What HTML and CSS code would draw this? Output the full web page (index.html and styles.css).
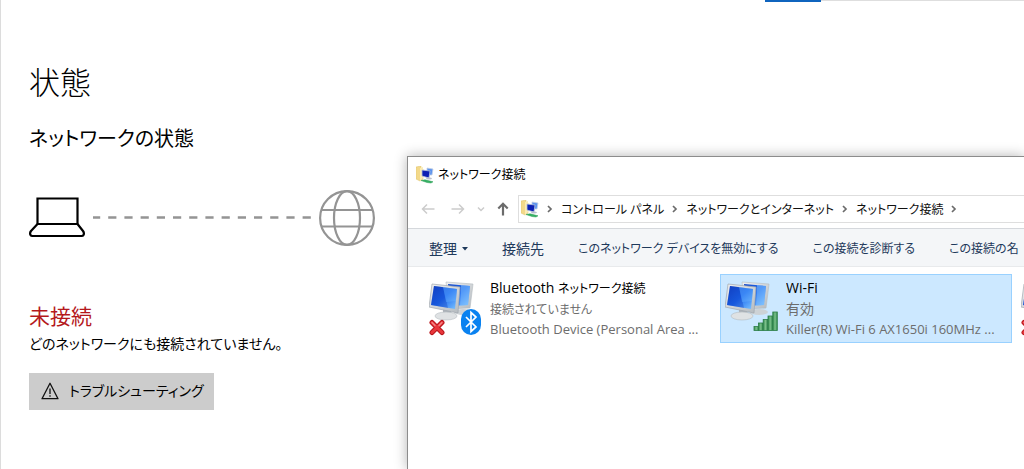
FILE: index.html
```
<!DOCTYPE html>
<html lang="ja">
<head>
  <meta charset="UTF-8" />
  <meta name="viewport" content="width=device-width, initial-scale=1.0" />
  <title>ネットワークの状態</title>
  <link rel="stylesheet" href="styles.css">
</head>
<body>
  <!-- Shared icons -->
  <svg class="sprite" aria-hidden="true">
    <defs>
      <linearGradient id="screen" x1="0" y1="0" x2="1" y2="1">
        <stop offset="0" stop-color="#1547c8" />
        <stop offset="0.5" stop-color="#1d6af0" />
        <stop offset="1" stop-color="#7cc4ff" />
      </linearGradient>
      <linearGradient id="metal" x1="0" y1="0" x2="1" y2="1">
        <stop offset="0" stop-color="#f0f1f2" />
        <stop offset="1" stop-color="#b4babf" />
      </linearGradient>
      <linearGradient id="bars" x1="0" y1="0" x2="1" y2="0">
        <stop offset="0" stop-color="#2f8a4c" />
        <stop offset="0.5" stop-color="#7cc08c" />
        <stop offset="1" stop-color="#2f8a4c" />
      </linearGradient>
    </defs>
    <symbol id="pcs" viewBox="0 0 54 56">
      <ellipse cx="34" cy="31" rx="9" ry="3" fill="#cdd2d6" />
      <path d="M17 1 44 3 41 27 20 28Z" fill="url(#metal)" stroke="#b4bac0" stroke-width=".6" />
      <path d="M19 3 41 5 39 24 22 25Z" fill="url(#screen)" />
      <path d="M32 4 41 5 39 24 31 25Z" fill="#8cc9ff" opacity=".5" />
      <path d="M14 27h7l2 7h-9z" fill="#aeb4bb" />
      <ellipse cx="17" cy="35" rx="11" ry="4" fill="#dfe2e4" stroke="#b4babf" stroke-width=".6" />
      <path d="M3 3 31 6 29 32 0 26Z" fill="url(#metal)" stroke="#a0a7af" stroke-width=".7" />
      <path d="M5 5 28 8 26 28 2 24Z" fill="url(#screen)" />
      <path d="M5 5 14 6 19 27 2 24Z" fill="#0b2fae" opacity=".3" />
      <path d="M14 6 28 8 27 20 17 21Z" fill="#74bcff" opacity=".35" />
    </symbol>
    <symbol id="cross" viewBox="0 0 16 16">
      <path d="M3 3 13 13M13 3 3 13" stroke="#b8161c" stroke-width="5" stroke-linecap="round" />
      <path d="M3 3 13 13M13 3 3 13" stroke="#e8373c" stroke-width="3" stroke-linecap="round" />
      <path d="M3 3 6 6M13 3 10 6" stroke="#f58c8c" stroke-width="1.2" stroke-linecap="round" />
    </symbol>
    <symbol id="netfolder" viewBox="0 0 18 18">
      <path d="M0 1 5 0v3l2 0v10l-3 2-4-2z" fill="#f3d98a" stroke="#dcc06a" stroke-width=".5" />
      <path d="M4 2 7 1v11l-3 3z" fill="#fbecb4" />
      <path d="M11 2 17 3 16 9 11 9Z" fill="#5c93ee" stroke="#c3cfe4" stroke-width=".8" />
      <path d="M6 4 14 5 13 12 6 10Z" fill="#0d20b4" stroke="#b5c3dd" stroke-width=".8" />
      <ellipse cx="13" cy="12.500" rx="3" ry="1" fill="#b9c0cc" />
      <path d="M5 14.500 9 13.800l4 1 4 1-2 1.200-4-.500z" fill="#35b265" stroke="#2a9a53" stroke-width=".5" />
    </symbol>
    <symbol id="chevron" viewBox="0 0 8 10">
      <path d="M2 2 5 5 2 8" fill="none" stroke="#6b6b6b" stroke-width="1.7" />
    </symbol>
  </svg>

  <main class="settings">
    <div class="top-edge"><span class="accent"></span><span class="rule"></span></div>
    <h1>状態</h1>
    <h2>ネットワークの状態</h2>

    <div class="diagram">
      <svg class="laptop" viewBox="0 0 56 56" fill="none" stroke="#000" stroke-width="2.2" stroke-linejoin="round">
        <path d="M8.500 8.500H48.500V34H8.500Z" stroke-linejoin="miter" />
        <path d="M8.500 34 2 41Q.500 43 1.500 45 2 46 3.500 46H52.500Q54 46 54.500 45 55.500 43 54 41L48.500 34" />
      </svg>
      <svg class="link-line" height="4"><line x1="0" y1="1.5" x2="100%" y2="1.5" stroke="#949494" stroke-width="2.4" stroke-dasharray="8.200 8" stroke-dashoffset="1" /></svg>
      <svg class="globe" viewBox="0 0 56 56" fill="none" stroke="#949494" stroke-width="2.200">
        <circle cx="28" cy="28" r="26.900" />
        <ellipse cx="28" cy="28" rx="13" ry="26.900" />
        <path d="M3 20H53M3 36.500H53" />
      </svg>
    </div>

    <p class="status">未接続</p>
    <p class="detail">どのネットワークにも接続されていません。</p>
    <button class="trouble" type="button">
      <svg width="18" height="18" viewBox="0 0 18 18" fill="none" stroke="#111" stroke-width="1.300">
        <path d="M9 1.300 17 16.700H1Z" stroke-linejoin="round" />
        <path d="M9 6.500V12M9 13.300V14.800" />
      </svg>
      トラブルシューティング
    </button>
  </main>

  <section class="window">
    <header class="titlebar">
      <svg width="18" height="18"><use href="#netfolder" /></svg>
      <span>ネットワーク接続</span>
    </header>

    <div class="navbar">
      <button type="button" aria-label="戻る"><svg width="14" height="12" viewBox="0 0 14 12" fill="none" stroke="#ccc" stroke-width="1.500"><path d="M13.500 6H1.500M6 1.500 1.500 6 6 10.500" /></svg></button>
      <button type="button" aria-label="進む"><svg width="14" height="12" viewBox="0 0 14 12" fill="none" stroke="#ccc" stroke-width="1.500"><path d="M.500 6H12.500M8 1.500 12.500 6 8 10.500" /></svg></button>
      <button class="recent" type="button" aria-label="最近表示した場所"><svg width="8" height="6" viewBox="0 0 8 6" fill="none" stroke="#ccc" stroke-width="1.500"><path d="M1 1.500 4 4.500 7 1.500" /></svg></button>
      <button class="up" type="button" aria-label="上へ"><svg width="12" height="14" viewBox="0 0 12 14" fill="none" stroke="#6b6b6b" stroke-width="2.2"><path d="M6 13.500V2M1.300 6.500 6 1.800 10.700 6.500" /></svg></button>
      <nav class="address">
        <svg width="18" height="18"><use href="#netfolder" /></svg>
        <svg width="8" height="10"><use href="#chevron" /></svg>
        <a href="#">コントロール パネル</a>
        <svg width="8" height="10"><use href="#chevron" /></svg>
        <a href="#">ネットワークとインターネット</a>
        <svg width="8" height="10"><use href="#chevron" /></svg>
        <a href="#">ネットワーク接続</a>
        <svg width="8" height="10"><use href="#chevron" /></svg>
      </nav>
    </div>

    <div class="toolbar">
      <button class="organize" type="button">整理<svg width="6" height="4" viewBox="0 0 6 4"><path d="M0 0H6L3 3.500Z" fill="#1e395b" /></svg></button>
      <button class="connect" type="button">接続先</button>
      <button type="button">このネットワーク デバイスを無効にする</button>
      <button type="button">この接続を診断する</button>
      <button type="button">この接続の名</button>
    </div>

    <ul class="connections">
      <li class="connection">
        <svg class="adapter" viewBox="0 0 54 56">
          <use href="#pcs" width="54" height="56" />
          <use href="#cross" x="0" y="38" width="16" height="17" />
          <rect x="32" y="28" width="20" height="26" rx="10" fill="#0a82f0" />
          <path d="M37 36 47 46 42 50.500V31.500L47 36 37 46" fill="none" stroke="#fff" stroke-width="1.700" />
        </svg>
        <div class="info">
          <p class="name">Bluetooth <span class="ja">ネットワーク接続</span></p>
          <p><span class="ja">接続されていません</span></p>
          <p class="device">Bluetooth Device (Personal Area ...</p>
        </div>
      </li>
      <li class="connection selected">
        <svg class="adapter" viewBox="0 0 54 56">
          <use href="#pcs" width="54" height="56" />
          <g fill="url(#bars)" stroke="#2b7d46" stroke-width=".8">
            <rect x="29" y="45.500" width="4.500" height="4" />
            <rect x="33.500" y="42" width="4.500" height="7.500" />
            <rect x="38.200" y="38.500" width="4.500" height="11" />
            <rect x="43" y="35" width="4.500" height="14.500" />
            <rect x="47.800" y="31" width="4.500" height="18.500" />
          </g>
        </svg>
        <div class="info">
          <p class="name">Wi-Fi</p>
          <p>有効</p>
          <p class="device">Killer(R) Wi-Fi 6 AX1650i 160MHz ...</p>
        </div>
      </li>
      <li class="connection">
        <svg class="adapter" viewBox="0 0 54 56">
          <use href="#pcs" width="54" height="56" />
          <use href="#cross" x="0" y="38" width="16" height="17" />
        </svg>
      </li>
    </ul>
  </section>
</body>
</html>
```
FILE: styles.css
```
/* Base Styles */
* {
  box-sizing: border-box;
  margin: 0;
  padding: 0;
}
body {
  position: relative;
  min-height: 100vh;
  overflow: hidden;
  font-family: "Open Sans", "Noto Sans CJK JP", sans-serif;
  font-feature-settings: "palt";
  background: #fff;
  color: #000;
}
button {
  font: inherit;
  font-feature-settings: inherit;
  color: inherit;
  background: none;
  border: none;
  white-space: nowrap;
}
svg {
  display: block;
  flex: none;
}
.sprite {
  position: absolute;
  width: 0;
  height: 0;
}

/* Settings page */
.settings {
  min-height: 100vh;
  padding-left: 28px;
  border-left: 1px solid #dcdcdc;
}
.top-edge {
  display: flex;
  justify-content: flex-end;
  height: 2px;
}
.accent {
  width: 56px;
  background: #0f64be;
}
.rule {
  width: 203px;
  height: 1px;
  background: #dedede;
}
h1 {
  margin-top: 60px;
  font-size: 31px;
  font-weight: 300;
  line-height: 40px;
}
h2 {
  margin-top: 21px;
  font-size: 20px;
  font-weight: 400;
  line-height: 32px;
}
.diagram {
  display: flex;
  align-items: center;
  gap: 8px;
  width: 346px;
  margin-top: 35px;
}
.laptop,
.globe {
  width: 56px;
  height: 56px;
}
.link-line {
  flex: 1;
  min-width: 0;
}
.status {
  margin-top: 56px;
  font-size: 21px;
  line-height: 28px;
  color: #b4181c;
}
.detail {
  margin-top: 2px;
  font-size: 14px;
  line-height: 24px;
}
.trouble {
  display: flex;
  align-items: center;
  gap: 10px;
  margin-top: 17px;
  padding: 6px 10px 7px 12px;
  font-size: 14px;
  line-height: 24px;
  background: #ccc;
}

/* Network connections window */
.window {
  position: absolute;
  top: 156px;
  left: 407px;
  right: 0;
  bottom: 0;
  overflow: hidden;
  font-size: 12px;
  line-height: 21px;
  background: #fff;
  border: solid #8c8c8c;
  border-width: 1px 0 0 1px;
  box-shadow: 0 0 12px rgba(0, 0, 0, 0.3);
}
.titlebar {
  display: flex;
  align-items: center;
  gap: 4px;
  height: 35px;
  padding-left: 8px;
}
.navbar {
  display: flex;
  align-items: center;
  height: 36px;
  padding: 0 0 2px 13px;
  gap: 16px;
}
.navbar .recent,
.navbar .up {
  margin-left: -4px;
}
.address {
  display: flex;
  flex: 1;
  align-items: center;
  gap: 7px;
  height: 28px;
  margin-left: -7px;
  padding-left: 2px;
  border: 1px solid #dedede;
  border-right: none;
  white-space: nowrap;
}
.address a {
  color: #111;
  text-decoration: none;
}
.toolbar {
  display: flex;
  align-items: center;
  gap: 34px;
  height: 39px;
  padding: 2px 0 0 21px;
  color: #1e395b;
  background: #f4f6f8;
  border-top: 1px solid #d5d8dc;
  border-bottom: 1px solid #e8eaec;
}
.toolbar button {
  flex: none;
}
.organize,
.connect {
  font-size: 14px;
}
.organize {
  display: flex;
  align-items: center;
  gap: 5px;
}

/* Connection list */
.connections {
  display: flex;
  gap: 4px;
  padding: 7px 0 0 16px;
  font-size: 14px;
  list-style: none;
}
.connection {
  display: flex;
  flex: none;
  gap: 7px;
  width: 292px;
  padding: 2px 4px;
  border: 1px solid transparent;
}
.connection.selected {
  background: #cce8ff;
  border-color: #99d1ff;
}
.adapter {
  width: 54px;
  height: 56px;
  margin-top: 4px;
}
.info {
  flex: 1;
  min-width: 0;
  color: #6d6d6d;
}
.info p {
  height: 21px;
  overflow: hidden;
  text-overflow: ellipsis;
  white-space: nowrap;
}
.info .name {
  color: #000;
}
.info .device {
  font-size: 13px;
}
.ja {
  font-size: 12px;
}
```
